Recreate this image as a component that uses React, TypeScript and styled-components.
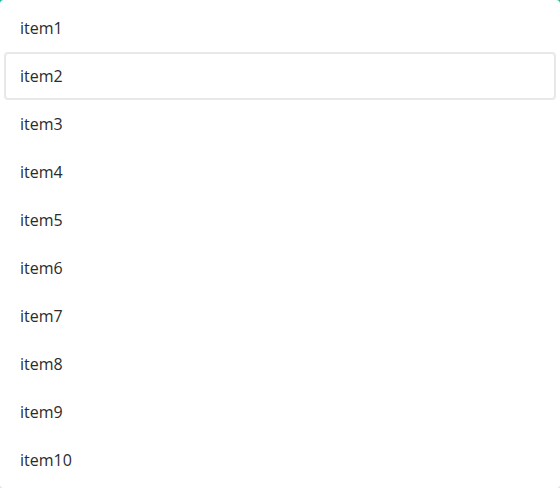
import React from "react";
import styled, { createGlobalStyle } from "styled-components";

const GlobalStyle = createGlobalStyle`
  html, body {
    margin: 0;
    padding: 0;
    background: linear-gradient(to bottom, #1abc9c 0, #1abc9c 20px, #e6e6e6 21px, #e6e6e6 100%);
  }
  body {
    font-family: "Open Sans", "Liberation Sans", sans-serif;
  }
`;

const items = Array.from({ length: 10 }, (_, i) => `item${i + 1}`);

const App = () => {
  return (
    <>
      <GlobalStyle />
      <ListPanel>
        {items.map((item, i) => (
          <Item key={item} active={i === 1}>
            {item}
          </Item>
        ))}
      </ListPanel>
    </>
  );
};

export default App;

const ListPanel = styled.ul`
  list-style: none;
  margin: 0;
  padding: 4px;
  height: 488px;
  box-sizing: border-box;
  background: #fff;
  border-radius: 4px;
  display: flex;
  flex-direction: column;
`;

const Item = styled.li<{ active?: boolean }>`
  height: 48px;
  box-sizing: border-box;
  display: flex;
  align-items: center;
  padding: 0 14px;
  border: 2px solid ${(p) => (p.active ? "#e8e8e8" : "transparent")};
  border-radius: 4px;
  font-size: 16px;
  color: #2b2b2b;
`;
